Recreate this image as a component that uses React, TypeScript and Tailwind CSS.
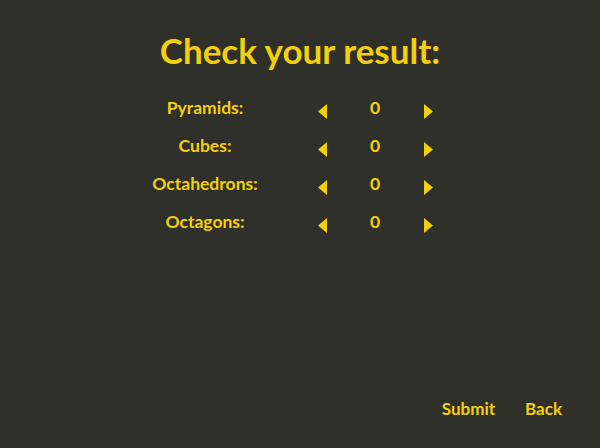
import React from 'react';

const items = [
  { label: 'Pyramids:', value: 0 },
  { label: 'Cubes:', value: 0 },
  { label: 'Octahedrons:', value: 0 },
  { label: 'Octagons:', value: 0 },
];

const Arrow = ({ dir }: { dir: 'left' | 'right' }) => (
  <svg width="9" height="15" viewBox="0 0 9 15" className="mt-[6px]">
    {dir === 'left' ? <polygon points="9,0 9,15 0,7.5" fill="#f3cf0e" /> : <polygon points="0,0 0,15 9,7.5" fill="#f3cf0e" />}
  </svg>
);

export default function App() {
  return (
    <div
      className="w-[600px] h-[448px] bg-[#30302b] text-[#f3cf0e] flex flex-col overflow-hidden"
      style={{ fontFamily: 'Lato, "Noto Sans", sans-serif' }}
    >
      <h1 className="text-center font-bold text-[35px] leading-[40px] pt-[30px]">Check your result:</h1>
      <div className="ml-[150px] mt-[19px] flex flex-col">
        {items.map((it) => (
          <div key={it.label} className="grid grid-cols-[110px_50px_24px_82px_24px] h-[38px] items-center font-bold text-[17.5px]">
            <span className="text-center">{it.label}</span>
            <span />
            <button className="flex justify-center">
              <Arrow dir="left" />
            </button>
            <span className="text-center">{it.value}</span>
            <button className="flex justify-center">
              <Arrow dir="right" />
            </button>
          </div>
        ))}
      </div>
      <div className="mt-auto flex justify-end gap-[30px] pr-[38px] pb-[27px] font-bold text-[17px] leading-[24px]">
        <button>Submit</button>
        <button>Back</button>
      </div>
    </div>
  );
}
